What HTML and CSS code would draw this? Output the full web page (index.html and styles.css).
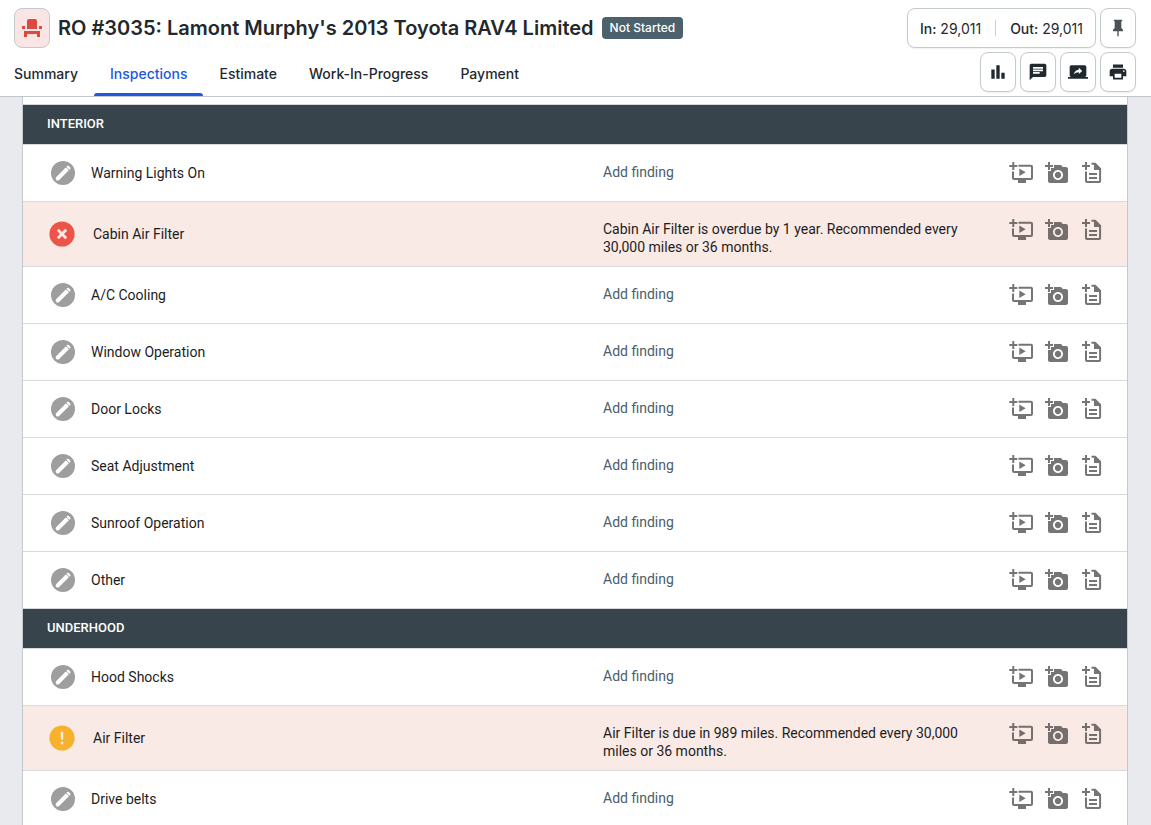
FILE: index.html
```html
<!DOCTYPE html>
<html lang="en">
<head>
  <meta charset="UTF-8" />
  <meta name="viewport" content="width=device-width, initial-scale=1.0" />
  <title>RO #3035 - Inspections</title>
  <link rel="stylesheet" href="styles.css">
</head>
<body>
  <svg class="sprite" aria-hidden="true">
    <symbol id="pencil" viewBox="0 0 24 24">
      <circle cx="12" cy="12" r="12" fill="#9e9e9e"/>
      <path d="M6.7 17.5L15.2 9" stroke="#fff" stroke-width="4" stroke-linecap="round"/>
      <path d="M13.6 7.4l3.2 3.2 1-1-3.2-3.2z" fill="#fff"/>
      <path d="M15.4 5.7l.6-.6a1.3 1.3 0 0 1 1.8 0l1.3 1.3a1.3 1.3 0 0 1 0 1.8l-.6.6z" fill="#fff"/>
    </symbol>
    <symbol id="failed" viewBox="0 0 26 26">
      <circle cx="13" cy="13" r="12.6" fill="#ec544a"/>
      <path d="M8.8 8.8l8.4 8.4M17.2 8.8l-8.4 8.4" stroke="#fbe9e6" stroke-width="2.8"/>
    </symbol>
    <symbol id="warning" viewBox="0 0 26 26">
      <circle cx="13" cy="13" r="12.6" fill="#f6b22c"/>
      <path d="M11.8 6.8h2.4v7.8h-2.4zM11.8 16.8h2.4v2.4h-2.4z" fill="#fbe9e6"/>
    </symbol>
    <symbol id="add-video" viewBox="0 0 24 24">
      <path d="M.3 5h8M4.3 1v8M9.5 4.7H22a1 1 0 0 1 1 1V17a1 1 0 0 1-1 1H5a1 1 0 0 1-1-1v-6.5" fill="none" stroke="currentColor" stroke-width="2"/>
      <path d="M9 18h8v4H9zM10.3 7.5l6.4 3.8-6.4 3.8z" fill="currentColor"/>
    </symbol>
    <symbol id="add-photo" viewBox="0 0 24 24">
      <path fill="currentColor" d="M3 4V1h2v3h3v2H5v3H3V6H0V4h3zm3 6V7h3V4h7l1.83 2H21c1.1 0 2 .9 2 2v12c0 1.1-.9 2-2 2H5c-1.1 0-2-.9-2-2V10h3zm7 9c2.76 0 5-2.24 5-5s-2.24-5-5-5-5 2.24-5 5 2.24 5 5 5zm-3.2-5c0 1.77 1.43 3.2 3.2 3.2s3.2-1.43 3.2-3.2-1.43-3.2-3.2-3.2-3.2 1.43-3.2 3.2z"/>
    </symbol>
    <symbol id="add-note" viewBox="0 0 24 24">
      <path d="M1 5h8M5 1v8M10.5 2.8H14l5.1 5.1V20a1 1 0 0 1-1 1H6a1 1 0 0 1-1-1v-9.5M8 13h8M8 17h8" fill="none" stroke="currentColor" stroke-width="2"/>
      <path d="M13 2h1.4L20 7.6V9h-7z" fill="currentColor"/>
    </symbol>
  </svg>

  <header class="header">
    <div class="header-left">
      <div class="title-row">
        <button class="seat-btn" aria-label="Waiting customer">
          <svg width="24" height="24" viewBox="0 0 24 24"><path fill="currentColor" d="M4 18v3h3v-3h10v3h3v-6H4zm15-8h3v3h-3zM2 10h3v3H2zm15 3H7V5c0-1.1.9-2 2-2h6c1.1 0 2 .9 2 2v8z"/></svg>
        </button>
        <h1>RO #3035: Lamont Murphy's 2013 Toyota RAV4 Limited</h1>
        <span class="badge">Not Started</span>
      </div>
      <nav class="tabs">
        <a href="#">Summary</a>
        <a href="#" class="active">Inspections</a>
        <a href="#">Estimate</a>
        <a href="#">Work-In-Progress</a>
        <a href="#">Payment</a>
      </nav>
    </div>
    <div class="header-right">
      <div class="btn-row">
        <button class="box-btn mileage">
          <span><b>In:</b> 29,011</span>
          <span class="divider"></span>
          <span><b>Out:</b> 29,011</span>
        </button>
        <button class="box-btn pin" aria-label="Pin">
          <svg width="20" height="20" viewBox="0 0 24 24"><path fill="currentColor" d="M16 12V4h1V2H7v2h1v8l-2 2v2h5.2v6h1.6v-6H18v-2z"/></svg>
        </button>
      </div>
      <div class="btn-row">
        <button class="box-btn" aria-label="Reports">
          <svg width="20" height="20" viewBox="0 0 24 24"><path fill="currentColor" d="M4 9h4v11H4zm12 4h4v7h-4zm-6-9h4v16h-4z"/></svg>
        </button>
        <button class="box-btn" aria-label="Messages">
          <svg width="20" height="20" viewBox="0 0 24 24"><path fill="currentColor" d="M20 2H4c-1.1 0-2 .9-2 2v18l4-4h14c1.1 0 2-.9 2-2V4c0-1.1-.9-2-2-2zM6 9h12v2H6V9zm8 5H6v-2h8v2zm4-6H6V6h12v2z"/></svg>
        </button>
        <button class="box-btn" aria-label="Share">
          <svg width="20" height="20" viewBox="0 0 24 24"><path fill="currentColor" d="M20 18c1.1 0 1.99-.9 1.99-2L22 6c0-1.11-.9-2-2-2H4c-1.11 0-2 .89-2 2v10c0 1.1.89 2 2 2H0v2h24v-2h-4zm-7-3.53v-2.19c-2.78 0-4.61.85-6 2.72.56-2.67 2.11-5.33 6-5.87V7l4 3.73-4 3.74z"/></svg>
        </button>
        <button class="box-btn" aria-label="Print">
          <svg width="20" height="20" viewBox="0 0 24 24"><path fill="currentColor" d="M19 8H5c-1.66 0-3 1.34-3 3v6h4v4h12v-4h4v-6c0-1.66-1.34-3-3-3zm-3 11H8v-5h8v5zm3-7c-.55 0-1-.45-1-1s.45-1 1-1 1 .45 1 1-.45 1-1 1zm-1-9H6v4h12V3z"/></svg>
        </button>
      </div>
    </div>
  </header>

  <main class="content">
    <div class="panel" id="panel"></div>
  </main>

  <script>
    const sections = [
      { title: 'INTERIOR', items: [
        { name: 'Warning Lights On' },
        { name: 'Cabin Air Filter', status: 'failed', finding: 'Cabin Air Filter is overdue by 1 year. Recommended every 30,000 miles or 36 months.' },
        { name: 'A/C Cooling' },
        { name: 'Window Operation' },
        { name: 'Door Locks' },
        { name: 'Seat Adjustment' },
        { name: 'Sunroof Operation' },
        { name: 'Other' },
      ]},
      { title: 'UNDERHOOD', items: [
        { name: 'Hood Shocks' },
        { name: 'Air Filter', status: 'warning', finding: 'Air Filter is due in 989 miles. Recommended every 30,000 miles or 36 months.' },
        { name: 'Drive belts' },
      ]},
    ];

    const icon = (id, size) => `<svg width="${size}" height="${size}"><use href="#${id}"/></svg>`;

    const row = item => `
      <li class="row ${item.status ? 'flagged' : ''}">
        <div class="item">
          <button aria-label="Set status of ${item.name}">${item.status ? icon(item.status, 26) : icon('pencil', 24)}</button>
          <span>${item.name}</span>
        </div>
        <div class="finding">
          ${item.finding ? `<p>${item.finding}</p>` : '<button class="add-finding">Add finding</button>'}
        </div>
        <div class="actions">
          <button aria-label="Add video">${icon('add-video', 24)}</button>
          <button aria-label="Add photo">${icon('add-photo', 24)}</button>
          <button aria-label="Add note">${icon('add-note', 24)}</button>
        </div>
      </li>`;

    document.getElementById('panel').innerHTML = sections.map(s => `
      <section>
        <h2>${s.title}</h2>
        <ul>${s.items.map(row).join('')}</ul>
      </section>`).join('');
  </script>
</body>
</html>
```
FILE: styles.css
```css
* {
  box-sizing: border-box;
}
body {
  margin: 0;
  height: 100vh;
  overflow: hidden;
  display: flex;
  flex-direction: column;
  font-family: 'Inter', sans-serif;
  font-size: 14px;
  color: #1f292e;
  background: #e9eaee;
}
button {
  margin: 0;
  padding: 0;
  border: none;
  background: none;
  font: inherit;
  color: inherit;
  cursor: pointer;
}
svg {
  display: block;
}
.sprite {
  position: absolute;
  width: 0;
  height: 0;
}

/* Header */
.header {
  display: flex;
  justify-content: space-between;
  flex-shrink: 0;
  padding: 8px 15px 0 14px;
  background: #fff;
  border-bottom: 1px solid #bfc7cb;
}
.title-row {
  display: flex;
  align-items: center;
  gap: 8px;
  height: 40px;
}
.seat-btn {
  display: flex;
  align-items: center;
  justify-content: center;
  width: 36px;
  height: 40px;
  border: 1px solid #c3cacd;
  border-radius: 8px;
  background: #fae5e5;
  color: #da4a40;
}
h1 {
  margin: 0;
  font-size: 20px;
  font-weight: 600;
  line-height: 24px;
}
.badge {
  padding: 0 8px;
  border-radius: 4px;
  background: #4c616c;
  color: #fff;
  font-size: 12px;
  font-weight: 500;
  line-height: 22px;
}
.tabs {
  display: flex;
  margin: 4px 0 0 -16px;
}
.tabs a {
  position: relative;
  padding: 0 16px;
  color: inherit;
  font-weight: 500;
  line-height: 44px;
  text-decoration: none;
}
.tabs a.active {
  color: #2159dc;
}
.tabs a.active::after {
  content: '';
  position: absolute;
  left: 0;
  right: 0;
  bottom: 0;
  height: 3px;
  border-radius: 3px 3px 0 0;
  background: #2159dc;
}
.header-right {
  display: flex;
  flex-direction: column;
  gap: 4px;
  flex-shrink: 0;
}
.btn-row {
  display: flex;
  justify-content: flex-end;
  gap: 4px;
}
.box-btn {
  display: flex;
  align-items: center;
  justify-content: center;
  width: 36px;
  height: 40px;
  border: 1px solid #c3cacd;
  border-radius: 8px;
  background: #fff;
  box-shadow: 0 1px 2px rgba(0, 0, 0, 0.06);
}
.pin {
  color: #4a5256;
}
.mileage {
  width: auto;
  padding: 0 12px;
  gap: 14px;
}
.mileage b {
  font-weight: 500;
}
.divider {
  width: 1px;
  height: 16px;
  background: #c8ced1;
}

/* Inspection list */
.content {
  flex: 1;
  min-height: 0;
  overflow: hidden;
}
.panel {
  margin: 0 23px 0 22px;
  padding-top: 7px;
  border: 1px solid #c3c9cd;
  border-width: 0 1px;
  background: #fff;
  font-family: 'Roboto', sans-serif;
  color: #1d1d1d;
}
h2 {
  margin: 0;
  padding: 0 24px 2px;
  border-top: 1px solid #d5d9dc;
  background: #37444b;
  color: #fff;
  font-size: 13px;
  font-weight: 500;
  line-height: 37px;
}
ul {
  margin: 0;
  padding: 0;
  list-style: none;
}
.row {
  display: grid;
  grid-template-columns: 580px 1fr auto;
  min-height: 57px;
  padding-right: 22px;
  border-top: 1px solid #d8dadd;
  line-height: 18px;
}
.item {
  display: flex;
  align-items: center;
  gap: 16px;
  padding-left: 28px;
}
.flagged {
  background: #faeae6;
}
.flagged .item {
  gap: 18px;
  padding-left: 26px;
}
.finding {
  padding: 18px 36px 10px 0;
}
.finding p {
  margin: 0;
}
.add-finding {
  display: block;
  color: #4b606b;
}
.actions {
  display: flex;
  align-items: flex-start;
  gap: 12px;
  padding-top: 16px;
  color: #757575;
}
.flagged .actions {
  color: #756e6c;
}
```
